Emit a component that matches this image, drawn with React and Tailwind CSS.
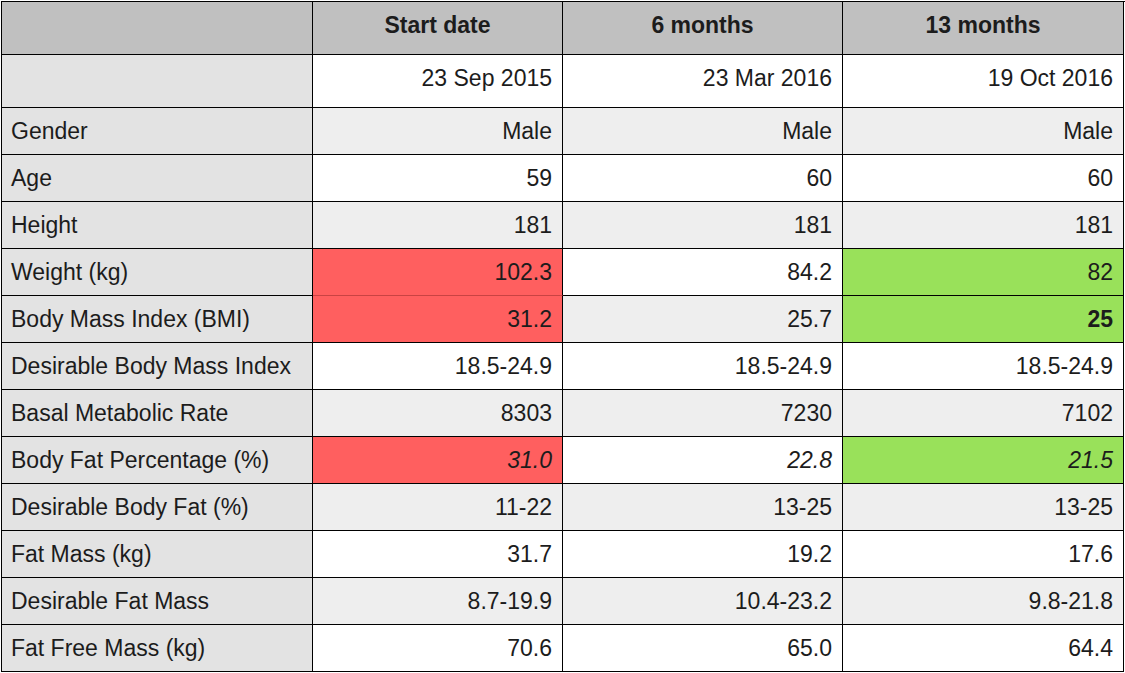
import React from "react";

const rows = [
  { label: "Gender", values: ["Male", "Male", "Male"] },
  { label: "Age", values: ["59", "60", "60"] },
  { label: "Height", values: ["181", "181", "181"] },
  { label: "Weight (kg)", values: ["102.3", "84.2", "82"], tone: ["red", null, "green"] },
  { label: "Body Mass Index (BMI)", values: ["31.2", "25.7", "25"], tone: ["red", null, "green"], bold: [false, false, true] },
  { label: "Desirable Body Mass Index", values: ["18.5-24.9", "18.5-24.9", "18.5-24.9"] },
  { label: "Basal Metabolic Rate", values: ["8303", "7230", "7102"] },
  { label: "Body Fat Percentage (%)", values: ["31.0", "22.8", "21.5"], tone: ["red", null, "green"], italic: true },
  { label: "Desirable Body Fat (%)", values: ["11-22", "13-25", "13-25"] },
  { label: "Fat Mass (kg)", values: ["31.7", "19.2", "17.6"] },
  { label: "Desirable Fat Mass", values: ["8.7-19.9", "10.4-23.2", "9.8-21.8"] },
  { label: "Fat Free Mass (kg)", values: ["70.6", "65.0", "64.4"] },
];

const toneBg = {
  red: "bg-[#ff5f5f]",
  green: "bg-[#99e15a]",
};

export default function App() {
  return (
    <div className="bg-white w-[1125px] h-[673px] pt-px pl-px text-[#1c1c1c]" style={{ fontFamily: '"Liberation Sans", Arial, sans-serif' }}>
      <div className="grid grid-cols-[311px_250px_280px_281px] border-l border-t border-black text-[23px] leading-none">
        {/* header */}
        <div className="h-[53px] bg-[#c0c0c0] border-r border-b border-black" />
        {["Start date", "6 months", "13 months"].map((h) => (
          <div key={h} className="h-[53px] bg-[#c0c0c0] border-r border-b border-black flex items-center justify-center pb-[5px] font-bold">
            {h}
          </div>
        ))}

        {/* dates */}
        <div className="h-[53px] bg-[#e3e3e3] border-r border-b border-black" />
        {["23 Sep 2015", "23 Mar 2016", "19 Oct 2016"].map((d) => (
          <div key={d} className="h-[53px] bg-white border-r border-b border-black flex items-center justify-end pr-[10px] pb-[5px]">
            {d}
          </div>
        ))}

        {rows.map((row, i) => {
          const stripe = i % 2 === 0 ? "bg-[#eeeeee]" : "bg-white";
          return (
            <React.Fragment key={row.label}>
              <div className="h-[47px] bg-[#e3e3e3] border-r border-b border-black flex items-center pl-[9px]">
                {row.label}
              </div>
              {row.values.map((v, j) => {
                const tone = row.tone && row.tone[j];
                const redAbove = tone === "red" && row.label === "Weight (kg)";
                return (
                  <div
                    key={j}
                    className={`h-[47px] border-r border-b flex items-center justify-end pr-[10px] ${
                      tone ? toneBg[tone] : stripe
                    } ${redAbove ? "border-b-[#c94343] border-r-black" : "border-black"} ${
                      row.italic ? "italic" : ""
                    } ${row.bold && row.bold[j] ? "font-bold" : ""}`}
                  >
                    {v}
                  </div>
                );
              })}
            </React.Fragment>
          );
        })}
      </div>
    </div>
  );
}
